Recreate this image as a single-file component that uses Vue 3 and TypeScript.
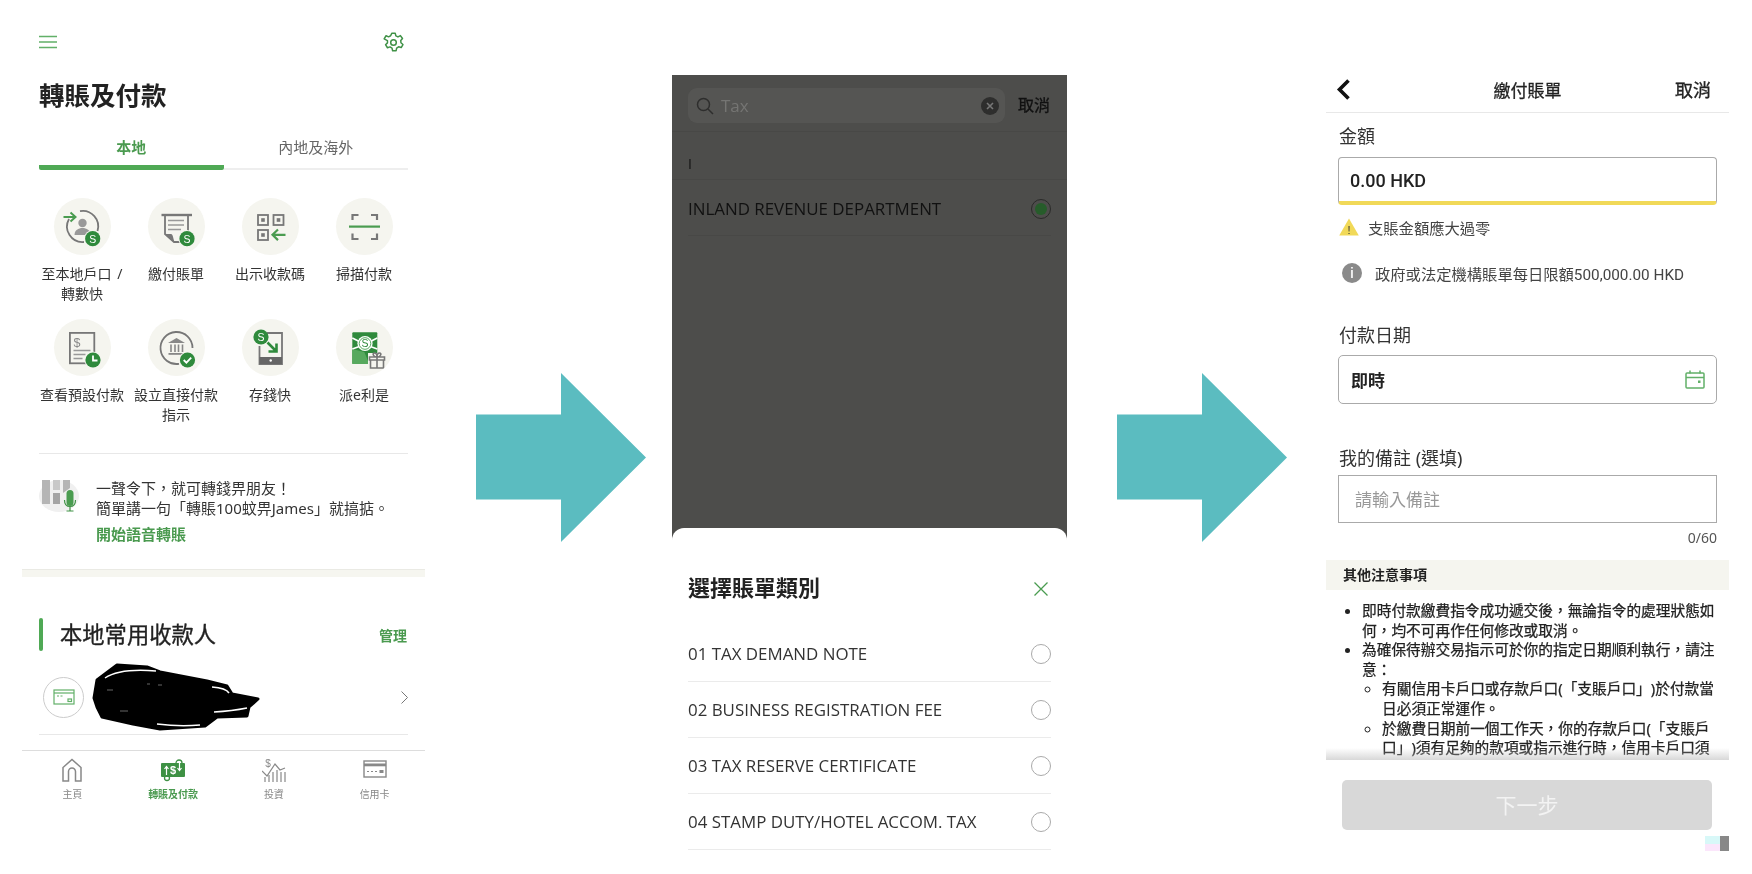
<script setup lang="ts">
interface Shortcut {
  label: string
  icon: string
}

const GREY = '#777'
const GREEN = '#4a9c50'

// round green badge that sits on the lower right of most shortcut icons
const badge = (cx: number, cy: number, inner: string, ring = true) =>
  `${ring ? `<circle cx="${cx}" cy="${cy}" r="8.6" fill="#f5f5ef"/>` : ''}<circle cx="${cx}" cy="${cy}" r="7.6" fill="#2f8a3c"/>${inner}`

const letterS = (x: number, y: number, fill = '#fff') =>
  `<text x="${x}" y="${y}" font-size="10.5" text-anchor="middle" fill="${fill}" font-family="Liberation Sans">S</text>`

const icons: Record<string, string> = {
  transfer: `<g fill="none" stroke="${GREY}" stroke-width="1.8"><path d="M26 13.2A15.5 15.5 0 0 1 43.5 33"/><path d="M15 21A15.5 15.5 0 0 0 30 44"/></g>
    <path d="M9.5 19H21M16.5 14.5l5 4.5-5 4.5" fill="none" stroke="${GREEN}" stroke-width="2"/>
    <circle cx="28.5" cy="25" r="4.2" fill="#999"/><path d="M20.5 37c0-5 4-7 8-7s8 2 8 7z" fill="#999"/>
    ${badge(38.7, 40.7, letterS(38.7, 44.5))}`,
  bill: `<rect x="13.5" y="15.8" width="30.5" height="2.4" fill="${GREY}"/>
    <path d="M17 18v18l9 8h7M40 18v16" fill="none" stroke="${GREY}" stroke-width="1.8"/>
    <path d="M17 36h6c2 0 2 4 3.5 8z" fill="${GREY}"/>
    <path d="M20 22.5h16M20 27h16M20 31.5h13" stroke="#999" stroke-width="1.4"/>
    ${badge(39, 40.7, letterS(39, 44.5))}`,
  qr: `<g fill="none" stroke="${GREY}" stroke-width="1.8"><rect x="16" y="17" width="10" height="10"/><rect x="31.5" y="17" width="10" height="10"/><rect x="16" y="32" width="10" height="10"/></g>
    <g fill="${GREY}"><rect x="19.2" y="20.2" width="3.6" height="3.6"/><rect x="34.7" y="20.2" width="3.6" height="3.6"/><rect x="19.2" y="35.2" width="3.6" height="3.6"/></g>
    <path d="M43.5 36.8H31M36 31.5l-5.5 5.3 5.5 5.3" fill="none" stroke="${GREEN}" stroke-width="2.2"/>`,
  scan: `<path d="M16.5 22v-5h6M35 17h6v5M16.5 35.5v5.5h6M35 41h6v-5.5" fill="none" stroke="${GREY}" stroke-width="2.2"/>
    <rect x="13" y="27.5" width="31" height="2.2" fill="${GREEN}"/>`,
  schedule: `<rect x="15.9" y="13.9" width="24.4" height="30.4" fill="none" stroke="${GREY}" stroke-width="1.8"/>
    <text x="23" y="27.5" font-size="12.5" text-anchor="middle" fill="#888" font-family="Liberation Sans">$</text>
    <path d="M19.5 31.5h17M19.5 35.5h12M19.5 39.5h9" stroke="#999" stroke-width="1.3"/>
    ${badge(39, 41, `<path d="M39 36.5v5h4.5" fill="none" stroke="#fff" stroke-width="1.8"/>`)}`,
  bank: `<path d="M31 44.8A16 16 0 1 1 44.5 29" fill="none" stroke="${GREY}" stroke-width="1.8"/>
    <path d="M28.5 19l-8.5 5h17z" fill="#888"/>
    <path d="M23 25.5v7.5M27 25.5v7.5M30.5 25.5v7.5M34.5 25.5v7.5" stroke="#888" stroke-width="1.6"/>
    <rect x="20.5" y="34" width="16" height="1.8" fill="#888"/>
    ${badge(39.5, 41, `<path d="M35.7 41l2.7 2.7 4.8-5" fill="none" stroke="#fff" stroke-width="1.8"/>`)}`,
  deposit: `<path d="M25 14h15v31H17.5V27" fill="none" stroke="${GREY}" stroke-width="1.8"/>
    <rect x="17.5" y="38" width="22.5" height="7" fill="#666"/><circle cx="28.7" cy="41.5" r="1.2" fill="#fff"/>
    ${badge(19, 18, letterS(19, 21.8), false)}
    <path d="M25.5 23.5l8.5 8.5M34.5 24.5v8h-8" fill="none" stroke="#2f8a3c" stroke-width="2.6"/>`,
  packet: `<rect x="16.3" y="13.3" width="25" height="31.7" rx="1" fill="#2f8a3c"/>
    <path d="M16.3 45V30l12 3 5 12z" fill="#57a95e"/>
    <path d="M16.3 19l7 3.5M41.3 19l-7 3.5M16.3 30l7-2.5M41.3 30l-7-2.5" stroke="#fff" stroke-width="1.6"/>
    <circle cx="29" cy="24.5" r="7.6" fill="#fff"/>
    <circle cx="29" cy="24.5" r="5.8" fill="none" stroke="#57a95e" stroke-width="1"/>${letterS(29, 28.2, '#2f8a3c')}
    <rect x="32" y="34" width="18" height="16" fill="#f5f5ef"/>
    <path d="M34.5 41h13v8h-13zM33.5 38h15v3h-15zM41 38v11M41 38c-4 0-5-4-2.5-4 1.5 0 2.5 2 2.5 4zM41 38c4 0 5-4 2.5-4-1.5 0-2.5 2-2.5 4z" fill="none" stroke="${GREY}" stroke-width="1.6"/>`,
}

const navIcons: Record<string, string> = {
  home: `<path d="M3 23V9.5L12 1.5l9 8V23h-5.5V13.5a3.5 3.5 0 0 0-7 0V23z" fill="none" stroke="#888" stroke-width="1.5"/>`,
  transfer: `<rect x="0" y="5" width="24" height="14" rx="1" fill="#3e9144"/>
    <circle cx="18" cy="5" r="3" fill="none" stroke="#3e9144" stroke-width="1.3"/><circle cx="6" cy="20" r="2.5" fill="none" stroke="#3e9144" stroke-width="1.3"/>
    <text x="12" y="16" font-size="11" text-anchor="middle" fill="#fff" font-family="Liberation Sans">$</text>
    <path d="M5.5 17V9M3.5 11l2-2.5 2 2.5M18.5 4v8M16.5 10l2 2.5 2-2.5" fill="none" stroke="#fff" stroke-width="1.2"/>`,
  invest: `<text x="6" y="9" font-size="10" text-anchor="middle" fill="#888" font-family="Liberation Sans">$</text>
    <path d="M0 13l5 5 8-12 5 6 5-2" fill="none" stroke="#888" stroke-width="1.2"/>
    <path d="M3 19v5M7 17v7M11 14v10M15 12v12M19 14v10M23 14v10" stroke="#888" stroke-width="1.2"/>`,
  card: `<rect x="1" y="3" width="22" height="16" fill="none" stroke="#888" stroke-width="1.4"/>
    <rect x="1" y="5.5" width="22" height="2.8" fill="#888"/>
    <path d="M4 13.5h2M8 13.5h2M12 13.5h2" stroke="#888" stroke-width="1.2"/><rect x="16.5" y="12" width="4" height="3" fill="#888"/>`,
}

const shortcuts: Shortcut[] = [
  { label: '至本地戶口 /\n轉數快', icon: 'transfer' },
  { label: '繳付賬單', icon: 'bill' },
  { label: '出示收款碼', icon: 'qr' },
  { label: '掃描付款', icon: 'scan' },
  { label: '查看預設付款', icon: 'schedule' },
  { label: '設立直接付款\n指示', icon: 'bank' },
  { label: '存錢快', icon: 'deposit' },
  { label: '派e利是', icon: 'packet' },
]

const navItems = [
  { label: '主頁', icon: 'home', active: false },
  { label: '轉賬及付款', icon: 'transfer', active: true },
  { label: '投資', icon: 'invest', active: false },
  { label: '信用卡', icon: 'card', active: false },
]

const categories = [
  '01 TAX DEMAND NOTE',
  '02 BUSINESS REGISTRATION FEE',
  '03 TAX RESERVE CERTIFICATE',
  '04 STAMP DUTY/HOTEL ACCOM. TAX',
]
</script>

<template>
  <div class="page">
    <!-- 轉賬及付款 -->
    <section class="phone-one">
      <div class="top-bar">
        <svg width="18" height="14" viewBox="0 0 18 14"><path d="M0 1.5h18M0 7h18M0 12.5h18" stroke="#62b068" stroke-width="1.6" /></svg>
        <svg width="21" height="21" viewBox="0 0 24 24" fill="none" stroke="#3f9146" stroke-width="1.7">
          <circle cx="12" cy="12" r="3.2" />
          <path d="M10 1.5h4l.7 3 2.4 1.1 2.8-1.5 2.4 3.3-2 2.3.2 2.6 2.3 2-2 3.5-3-.9-2.2 1.5-.6 3h-4l-.7-3-2.3-1.4-2.9 1-2.2-3.5 2.2-2.1v-2.6L1.3 7.9l2.2-3.6 2.9 1.2 2.3-1.2z" stroke-linejoin="round" />
        </svg>
      </div>
      <h1 class="title">轉賬及付款</h1>
      <div class="tabs">
        <div class="tab active">本地</div>
        <div class="tab">內地及海外</div>
      </div>
      <div class="shortcuts">
        <div v-for="item in shortcuts" :key="item.icon" class="shortcut">
          <svg class="shortcut-icon" width="57" height="57" viewBox="0 0 57 57" v-html="icons[item.icon]"></svg>
          <div class="shortcut-label">{{ item.label }}</div>
        </div>
      </div>
      <div class="voice">
        <svg width="40" height="34" viewBox="0 0 40 34">
          <ellipse cx="20" cy="18" rx="20" ry="16" fill="#f0f0f0" />
          <rect x="3" y="2" width="8" height="24" fill="#b5b5b5" />
          <rect x="14" y="2" width="7" height="10" fill="#c8c8c8" />
          <rect x="14" y="15" width="7" height="11" fill="#a5a5a5" />
          <path d="M24 2h7v8l-7 5z" fill="#b5b5b5" />
          <rect x="27.5" y="12" width="7" height="16" rx="3.5" fill="#4a9c50" />
          <path d="M25.5 22c0 4.500 2.500 6.500 5.500 6.500s5.500-2 5.500-6.500M31 28.500v4M27.500 33h7" fill="none" stroke="#3e9144" stroke-width="1.200" />
        </svg>
        <div class="voice-text">
          <div>一聲令下，就可轉錢畀朋友！</div>
          <div>簡單講一句「轉賬100蚊畀James」就搞掂。</div>
          <div class="voice-link">開始語音轉賬</div>
        </div>
      </div>
      <div class="band"></div>
      <div class="payee-head">
        <span class="payee-bar"></span>
        <h2>本地常用收款人</h2>
        <span class="manage">管理</span>
      </div>
      <div class="payee-row">
        <span class="payee-avatar">
          <svg width="22" height="16" viewBox="0 0 22 16" fill="none" stroke="#62b068" stroke-width="1.2">
            <rect x="1" y="1" width="20" height="14" />
            <path d="M1 4h20" />
            <path d="M4 7h2M7.5 7h2" />
            <rect x="15" y="10" width="3.5" height="2.5" />
          </svg>
        </span>
        <!-- name scribbled out in the source -->
        <svg class="scribble" width="170" height="70" viewBox="92 662 170 70">
          <path d="M97 680L117 665 147 667 160 672 207 681 227 686 232 694 258 699 249 707 247 716 217 717 205 726 160 729 133 724 102 717 97 707 94 698z" fill="#000" stroke="#000" stroke-width="3" stroke-linejoin="round" />
          <path d="M105 678Q120 668 156 671M212 687Q226 688 229 693M214 712Q232 711 247 708M157 724Q180 727 200 725" fill="none" stroke="#fff" stroke-width="1.5" />
          <path d="M147 684h3M158 685h4M120 711h8M107 690h6" stroke="#666" stroke-width="1" />
        </svg>
        <svg class="chevron" width="7" height="13" viewBox="0 0 7 13"><path d="M.5.5l6 6-6 6" fill="none" stroke="#777" stroke-width="1" /></svg>
      </div>
      <nav class="bottom-nav">
        <div v-for="item in navItems" :key="item.icon" class="nav-item" :class="{ active: item.active }">
          <svg width="24" height="24" viewBox="0 0 24 24" v-html="navIcons[item.icon]"></svg>
          <span>{{ item.label }}</span>
        </div>
      </nav>
    </section>

    <svg class="arrow" width="170" height="169" viewBox="0 0 170 169"><polygon points="0,41.5 85,41.5 85,0 170,84.5 85,169 85,126.5 0,126.5" fill="#5bbcc0" /></svg>

    <!-- 選擇賬單類別 -->
    <section class="phone-two">
      <div class="dim">
        <div class="search-row">
          <div class="search-box">
            <svg width="18" height="18" viewBox="0 0 18 18" fill="none" stroke="#2e2e2d" stroke-width="1.5"><circle cx="7.5" cy="7.5" r="6" /><path d="M12 12l5 5" /></svg>
            <span class="search-value">Tax</span>
            <svg class="search-clear" width="18" height="18" viewBox="0 0 18 18"><circle cx="9" cy="9" r="9" fill="#2e2e2d" /><path d="M6 6l6 6M12 6l-6 6" stroke="#777" stroke-width="1.6" /></svg>
          </div>
          <span class="search-cancel">取消</span>
        </div>
        <div class="index-row">I</div>
        <div class="result-row">
          <span>INLAND REVENUE DEPARTMENT</span>
          <svg width="20" height="20" viewBox="0 0 20 20"><circle cx="10" cy="10" r="9.5" fill="none" stroke="#2a2a29" /><circle cx="10" cy="10" r="6" fill="#265c2a" /></svg>
        </div>
      </div>
      <div class="sheet">
        <div class="sheet-head">
          <h2>選擇賬單類別</h2>
          <svg width="14" height="14" viewBox="0 0 14 14"><path d="M.5.5l13 13M13.5.5l-13 13" stroke="#4a9c50" stroke-width="1.3" /></svg>
        </div>
        <div v-for="name in categories" :key="name" class="sheet-row">
          <span>{{ name }}</span>
          <span class="radio"></span>
        </div>
      </div>
    </section>

    <svg class="arrow arrow-two" width="170" height="169" viewBox="0 0 170 169"><polygon points="0,41.5 85,41.5 85,0 170,84.5 85,169 85,126.5 0,126.5" fill="#5bbcc0" /></svg>

    <!-- 繳付賬單 -->
    <section class="phone-three">
      <header class="form-head">
        <svg width="15" height="23" viewBox="0 0 15 23"><path d="M12.5 2.5l-9 9 9 9" fill="none" stroke="#111" stroke-width="3.6" /></svg>
        <span class="form-title">繳付賬單</span>
        <span class="form-cancel">取消</span>
      </header>
      <div class="form">
        <label class="field-label first">金額</label>
        <div class="field amount">0.00 HKD</div>
        <div class="hint warn">
          <svg width="20" height="18" viewBox="0 0 20 18"><path d="M10 .5L19.8 17.5H.2z" fill="#f1d958" /><text x="10" y="15.5" font-size="11" text-anchor="middle" fill="#333" font-family="Liberation Sans">!</text></svg>
          <span>支賬金額應大過零</span>
        </div>
        <div class="hint info">
          <svg width="20" height="20" viewBox="0 0 20 20"><circle cx="10" cy="10" r="10" fill="#8a8a8a" /><text x="10" y="15" font-size="14" text-anchor="middle" fill="#eee" font-weight="700" font-family="Liberation Sans">i</text></svg>
          <span>政府或法定機構賬單每日限額500,000.00 HKD</span>
        </div>
        <label class="field-label date">付款日期</label>
        <div class="field date-field">
          <span>即時</span>
          <svg width="20" height="19" viewBox="0 0 20 19" fill="none" stroke="#62b068" stroke-width="1.5"><rect x="1" y="3" width="18" height="15" rx="1" /><path d="M1 7.5h18M5 .5v3M15 .5v3" /><rect x="13" y="10.5" width="2.5" height="2.5" fill="#62b068" stroke="none" /></svg>
        </div>
        <label class="field-label note">我的備註 (選填)</label>
        <div class="field note-field">請輸入備註</div>
        <div class="counter">0/60</div>
      </div>
      <div class="notes-head">其他注意事項</div>
      <div class="notes">
        <ul>
          <li>即時付款繳費指令成功遞交後，無論指令的處理狀態如<br />何，均不可再作任何修改或取消。</li>
          <li>為確保待辦交易指示可於你的指定日期順利執行，請注<br />意：
            <ul>
              <li>有關信用卡戶口或存款戶口(「支賬戶口」)於付款當<br />日必須正常運作。</li>
              <li>於繳費日期前一個工作天，你的存款戶口(「支賬戶<br />口」)須有足夠的款項或指示進行時，信用卡戶口須</li>
            </ul>
          </li>
        </ul>
      </div>
      <div class="next-btn">下一步</div>
      <div class="corner-mark"><span class="pastel"></span><span class="block"></span></div>
    </section>
  </div>
</template>

<style>
body {
  background: #fff;
}
</style>

<style scoped>
.page {
  display: flex;
  align-items: flex-start;
  width: 1752px;
  height: 874px;
  overflow: hidden;
  background: #fff;
  color: #222;
  font-family: "Noto Sans", "Noto Sans CJK TC", sans-serif;
  text-spacing-trim: space-all;
  filter: blur(0.3px);
}

h1,
h2 {
  margin: 0;
}

/* first phone */
.phone-one {
  width: 403px;
  margin-left: 22px;
  flex: none;
}

.top-bar {
  display: flex;
  justify-content: space-between;
  align-items: center;
  height: 82px;
  box-sizing: border-box;
  padding: 2px 21px 0 17px;
}

.title {
  margin: -1px 0 0 17px;
  font-size: 25.5px;
  line-height: 28px;
  font-weight: 700;
}

.tabs {
  display: grid;
  grid-template-columns: 1fr 1fr;
  margin: 21px 17px 0;
}

.tab {
  height: 40px;
  box-sizing: border-box;
  text-align: center;
  font-size: 15px;
  line-height: 34px;
  color: #666;
  border-bottom: 2px solid #eee;
}

.tab.active {
  color: #4a9a4f;
  font-weight: 700;
  border-bottom: 5px solid #4fa955;
  border-radius: 0 0 2px 2px;
}

.shortcuts {
  display: grid;
  grid-template-columns: repeat(4, 94px);
  grid-auto-rows: 121px;
  margin: 28px 0 0 13px;
}

.shortcut {
  display: flex;
  flex-direction: column;
  align-items: center;
}

.shortcut-icon {
  flex: none;
  border-radius: 50%;
  background: #f5f5ef;
}

.shortcut-label {
  margin-top: 9px;
  font-size: 14px;
  line-height: 20px;
  word-spacing: 2px;
  color: #333;
  text-align: center;
  white-space: pre-line;
}

.voice {
  display: flex;
  gap: 17px;
  height: 116px;
  box-sizing: border-box;
  margin: 13px 17px 0;
  padding-top: 24px;
  border-top: 1px solid #e8e8e8;
}

.voice-text {
  font-size: 15px;
  line-height: 20px;
  color: #333;
  white-space: nowrap;
}

.voice-link {
  margin-top: 6px;
  color: #4a9a4f;
  font-weight: 700;
}

.band {
  height: 8px;
  box-sizing: border-box;
  border-top: 1px solid #eaeae4;
  background: #f6f6f0;
}

.payee-head {
  display: flex;
  align-items: center;
  gap: 17px;
  height: 33px;
  margin: 41px 18px 0 17px;
}

.payee-bar {
  width: 4px;
  height: 33px;
  border-radius: 2px;
  background: #4fa955;
}

.payee-head h2 {
  margin-bottom: 2px;
  font-size: 22.3px;
  font-weight: 400;
  -webkit-text-stroke: 0.35px #222;
}

.manage {
  margin-left: auto;
  font-size: 14px;
  font-weight: 700;
  color: #4a9a4f;
}

.payee-row {
  display: flex;
  align-items: center;
  height: 74px;
  margin: 9px 17px 0;
  padding-left: 4px;
  border-bottom: 1px solid #e8e8e8;
}

.payee-avatar {
  display: flex;
  align-items: center;
  justify-content: center;
  width: 41px;
  height: 41px;
  box-sizing: border-box;
  border: 1px solid #ccc;
  border-radius: 50%;
}

.scribble {
  margin-left: 8px;
}

.chevron {
  margin-left: auto;
}

.bottom-nav {
  display: grid;
  grid-template-columns: repeat(4, 1fr);
  margin-top: 15px;
  padding-top: 7px;
  border-top: 1px solid #ddd;
}

.nav-item {
  display: flex;
  flex-direction: column;
  align-items: center;
  gap: 5px;
  font-size: 10px;
  line-height: 14px;
  color: #888;
}

.nav-item.active {
  color: #4a9a4f;
  font-weight: 700;
}

.arrow {
  flex: none;
  margin: 373px 0 0 51px;
}

.arrow-two {
  margin-left: 50px;
}

/* second phone */
.phone-two {
  display: flex;
  flex-direction: column;
  flex: none;
  width: 395px;
  height: 799px;
  margin: 75px 0 0 26px;
  background: #4d4d4b;
  font-family: "Open Sans", "Noto Sans CJK TC", sans-serif;
}

.dim {
  height: 453px;
  color: #111;
}

.search-row {
  display: flex;
  height: 57px;
  box-sizing: border-box;
  padding: 13px 16px 0;
  border-bottom: 1px solid #484846;
}

.search-box {
  display: flex;
  align-items: center;
  width: 317px;
  height: 35px;
  box-sizing: border-box;
  padding: 0 6px 0 8px;
  border-radius: 9px;
  background: #555553;
}

.search-value {
  margin-left: 7px;
  font-size: 17px;
  color: #757573;
}

.search-clear {
  margin-left: auto;
}

.search-cancel {
  margin-left: 13px;
  font-size: 16px;
  line-height: 35px;
  -webkit-text-stroke: 0.3px #111;
}

.index-row {
  height: 48px;
  box-sizing: border-box;
  padding: 21px 0 0 16px;
  font-size: 14px;
  line-height: 22px;
  border-bottom: 1px solid #484846;
}

.result-row {
  display: flex;
  justify-content: space-between;
  align-items: center;
  height: 56px;
  box-sizing: border-box;
  margin: 0 16px;
  padding-top: 2px;
  font-size: 16.9px;
  border-bottom: 1px solid #484846;
}

.sheet {
  flex: 1;
  padding: 41px 16px 0;
  border-radius: 12px 12px 0 0;
  background: #fff;
}

.sheet-head {
  display: flex;
  justify-content: space-between;
  align-items: center;
  height: 40px;
  margin-bottom: 17px;
  padding-right: 3px;
}

.sheet-head h2 {
  margin-bottom: 6px;
  font-size: 22px;
  font-weight: 700;
}

.sheet-row {
  display: flex;
  justify-content: space-between;
  align-items: center;
  height: 56px;
  box-sizing: border-box;
  font-size: 16.9px;
  color: #333;
  border-bottom: 1px solid #ebebeb;
}

.radio {
  width: 20px;
  height: 20px;
  box-sizing: border-box;
  border: 1px solid #aaa;
  border-radius: 50%;
}

/* third phone */
.phone-three {
  flex: none;
  width: 403px;
  margin-left: 39px;
}

.form-head {
  display: grid;
  grid-template-columns: 1fr auto 1fr;
  align-items: center;
  height: 113px;
  box-sizing: border-box;
  padding: 66px 10px 0;
  border-bottom: 1px solid #e8e8e8;
}

.form-title {
  font-size: 17px;
  -webkit-text-stroke: 0.3px #222;
}

.form-cancel {
  justify-self: end;
  margin-right: 8px;
  font-size: 18px;
  -webkit-text-stroke: 0.3px #222;
}

.form {
  padding: 0 12px;
}

.field-label {
  display: block;
  margin-left: 1px;
  font-size: 18px;
  line-height: 24px;
  color: #333;
}

.field-label.first {
  margin-top: 11px;
}

.field-label.date {
  margin-top: 40px;
}

.field-label.note {
  margin-top: 42px;
}

.field {
  box-sizing: border-box;
  display: flex;
  align-items: center;
  border: 1.5px solid #aaa;
  font-family: Roboto, "Noto Sans CJK TC", sans-serif;
  font-size: 17px;
  color: #222;
}

.amount {
  height: 48px;
  margin-top: 9px;
  padding: 2px 0 0 11px;
  font-size: 18px;
  font-weight: 500;
  border-radius: 4px;
  border-bottom: 4px solid #f1d958;
}

.hint {
  display: flex;
  align-items: center;
  height: 20px;
  font-family: Roboto, "Noto Sans CJK TC", sans-serif;
  font-size: 15.3px;
  color: #444;
  white-space: nowrap;
}

.warn {
  gap: 9px;
  margin: 12px 0 0 1px;
}

.info {
  gap: 13px;
  margin: 26px 0 0 4px;
}

.date-field {
  justify-content: space-between;
  height: 49px;
  margin-top: 8px;
  padding: 0 11.5px 0 12px;
  font-weight: 700;
  border-radius: 5px;
}

.note-field {
  height: 48px;
  margin-top: 5px;
  padding: 0 0 2px 16px;
  color: #999;
}

.counter {
  margin-top: 7px;
  font-size: 14px;
  line-height: 16px;
  color: #555;
  text-align: right;
}

.notes-head {
  height: 30px;
  margin-top: 14px;
  padding-left: 17px;
  font-size: 14px;
  line-height: 30px;
  font-weight: 700;
  background: #f5f5ef;
}

.notes {
  position: relative;
  height: 170px;
  box-sizing: border-box;
  padding-top: 11px;
  overflow: hidden;
  font-size: 14.7px;
  line-height: 19.6px;
  -webkit-text-stroke: 0.25px #222;
  white-space: nowrap;
}

.notes::after {
  content: "";
  position: absolute;
  left: 0;
  right: 0;
  bottom: 0;
  height: 12px;
  background: linear-gradient(to bottom, rgba(255, 255, 255, 0), rgba(190, 190, 190, 0.6));
}

.notes ul {
  margin: 0;
  padding-left: 36px;
  list-style: disc;
}

.notes ul ul {
  padding-left: 20px;
  list-style: circle;
}

.next-btn {
  height: 50px;
  margin: 20px 17px 0 16px;
  border-radius: 5px;
  background: #d8d8d8;
  color: #f3f3f3;
  font-size: 21px;
  line-height: 50px;
  text-align: center;
}

.corner-mark {
  display: flex;
  justify-content: flex-end;
  height: 15px;
  margin-top: 6px;
}

.pastel {
  width: 15px;
  background: linear-gradient(to bottom, #d8f8f8, #d8f8f8 50%, #fbe6fb 50%);
}

.block {
  width: 9px;
  background: #888;
}
</style>
